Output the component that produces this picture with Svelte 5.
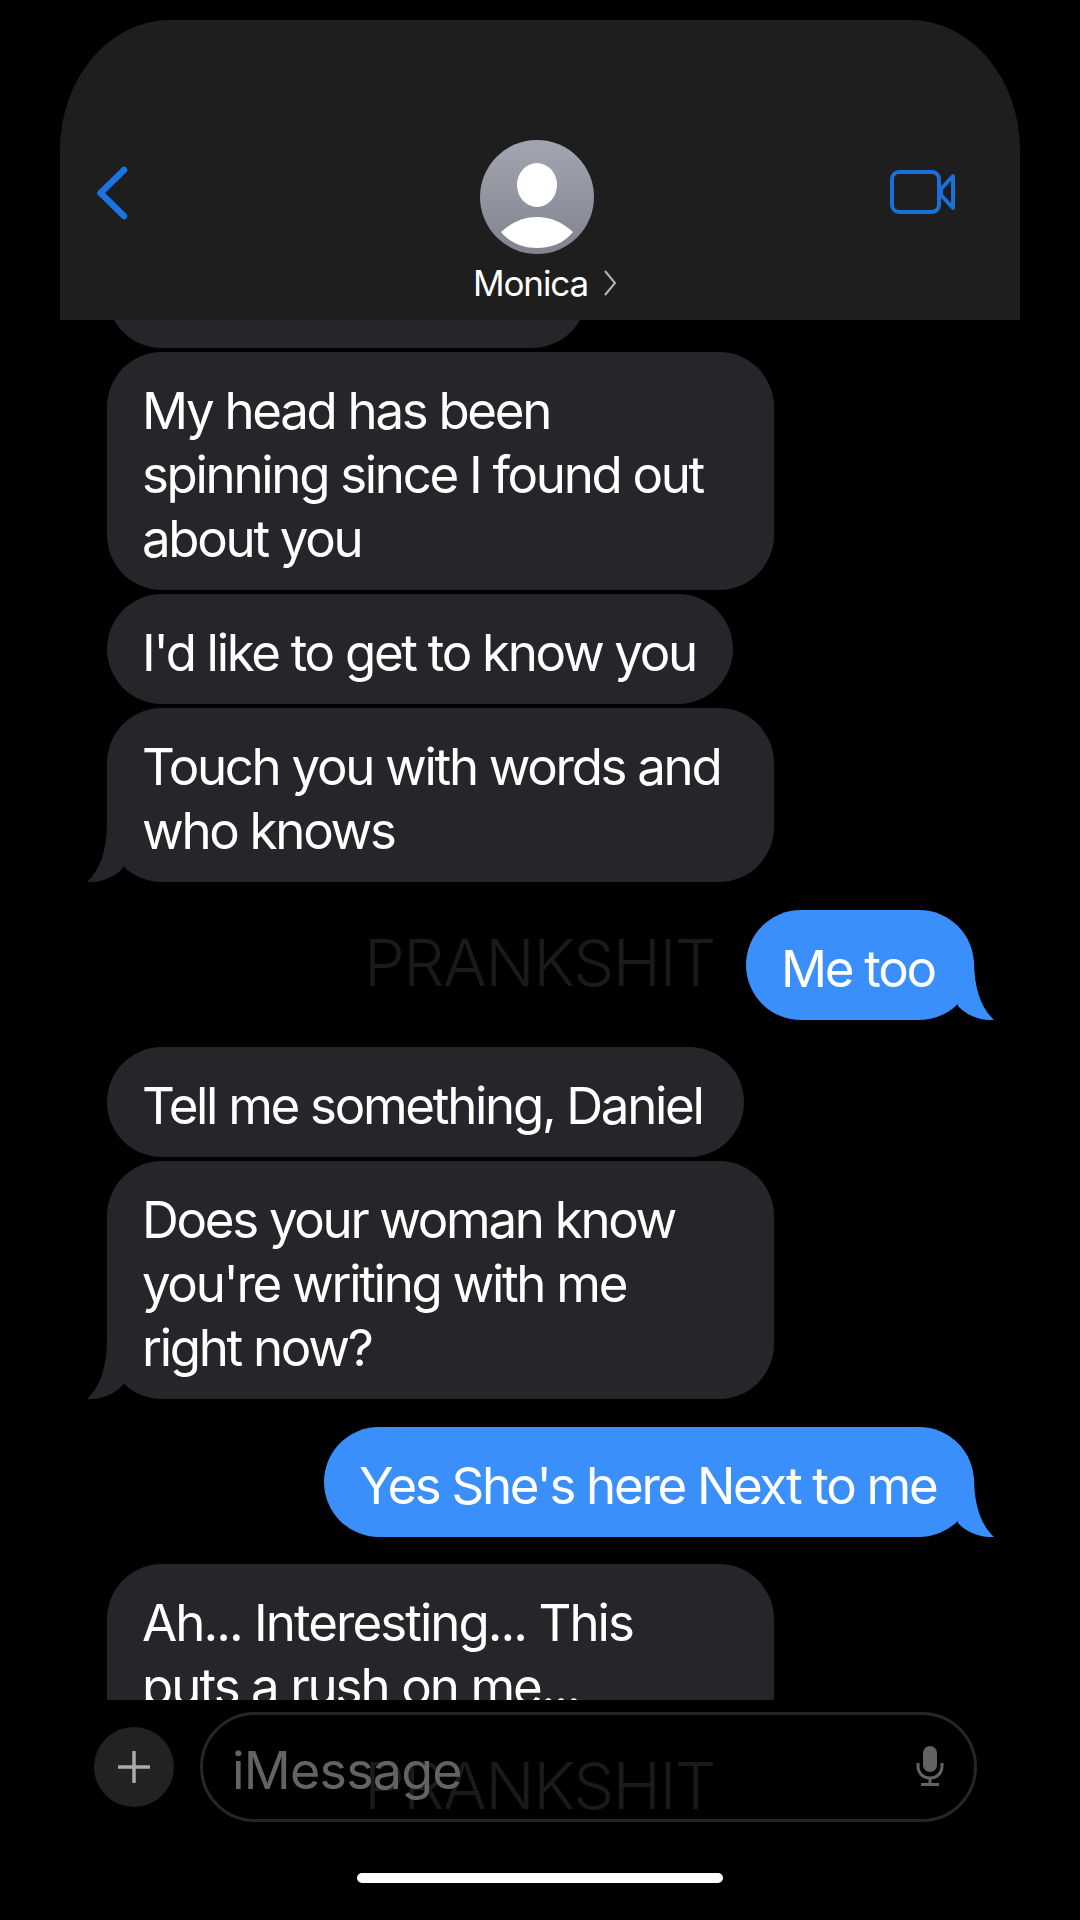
<script>
  const groups = [
    { side: 'in', top: 4, text: ['My head has been', 'spinning since I found out', 'about you'], w: 667 },
    { side: 'in', top: 4, text: ["I'd like to get to know you"], w: 626 },
    { side: 'in', top: 4, text: ['Touch you with words and', 'who knows'], w: 667, tail: true },
    { side: 'out', top: 28, text: ['Me too'], w: 228, tail: true },
    { side: 'in', top: 27, text: ['Tell me something, Daniel'], w: 637 },
    { side: 'in', top: 4, text: ['Does your woman know', "you're writing with me", 'right now?'], w: 667, tail: true },
    { side: 'out', top: 28, text: ["Yes She's here Next to me"], w: 650, tail: true },
    { side: 'in', top: 27, text: ['Ah... Interesting... This', 'puts a rush on me...', 'I need to know more'], w: 667, loose: true }
  ];
</script>

<div class="screen">
  <div class="mark one">PRANKSHIT</div>
  <div class="mark two">PRANKSHIT</div>

  <header class="nav">
    <svg class="back" width="34" height="56" viewBox="0 0 34 56" aria-hidden="true">
      <path d="M29 5 L5.500 28 L29 51" />
    </svg>
    <div class="contact">
      <svg class="avatar" width="114" height="114" viewBox="0 0 114 114" aria-hidden="true">
        <defs>
          <linearGradient id="av" x1="0" y1="0" x2="0" y2="1">
            <stop offset="0" stop-color="#a3a6b0" />
            <stop offset="1" stop-color="#81848e" />
          </linearGradient>
        </defs>
        <circle cx="57" cy="57" r="57" fill="url(#av)" />
        <ellipse cx="57" cy="45" rx="20" ry="22" fill="#fff" />
        <path d="M21 92 C32 82 44 77 57 77 C70 77 82 82 93 92 C84 103 71 108 57 108 C43 108 30 103 21 92 Z" fill="#fff" />
      </svg>
      <div class="name">
        <span>Monica</span>
        <svg width="14" height="26" viewBox="0 0 14 26" aria-hidden="true"><path d="M2 1 L12 13 L2 25" /></svg>
      </div>
    </div>
    <svg class="video" width="66" height="44" viewBox="0 0 66 44" aria-hidden="true">
      <rect x="2" y="2" width="47" height="40" rx="7" />
      <path d="M51 19 L63 6 V38 L51 25 Z" />
    </svg>
  </header>

  <main class="thread">
    <div class="stub"></div>
    {#each groups as g}
      <div class="row {g.side}" style="margin-top:{g.top}px">
        <div class="bubble" class:loose={g.loose} style="width:{g.w}px">
          {#each g.text as line}<div class="line">{line}</div>{/each}
          {#if g.tail}
            <svg class="tail" width="50" height="60" viewBox="0 0 50 60" aria-hidden="true">
              <path d="M31 0 C31 28 24 48 11 60 C26 61 40 54 47 46 L47 0 Z" />
            </svg>
          {/if}
        </div>
      </div>
    {/each}
  </main>

  <footer class="composer">
    <div class="plus">
      <svg width="32" height="32" viewBox="0 0 32 32" aria-hidden="true"><path d="M16 1 V31 M1 16 H31" /></svg>
    </div>
    <div class="field">
      <span class="placeholder">iMessage</span>
      <svg class="mic" width="28" height="40" viewBox="0 0 28 40" aria-hidden="true">
        <rect x="7" y="0" width="14" height="26" rx="7" class="micfill" />
        <path d="M2 17 V20 C2 27 7 32 14 32 C21 32 26 27 26 20 V17 M14 32 V38 M5 38.500 H23" />
      </svg>
    </div>
  </footer>
  <div class="home"><span></span></div>
</div>

<style>
  :global(body) {
    background: #000;
  }
  .screen {
    position: relative;
    width: 1080px;
    height: 1920px;
    background: #000;
    overflow: hidden;
    font-family: Inter, "Liberation Sans", sans-serif;
    color: #fff;
    display: flex;
    flex-direction: column;
    padding-top: 20px;
    box-sizing: border-box;
  }
  .nav {
    height: 300px;
    margin: 0 60px;
    flex: none;
    background: #1e1e1e;
    border-radius: 110px 110px 0 0 / 130px 130px 0 0;
    display: flex;
    justify-content: space-between;
    align-items: flex-start;
    position: relative;
    padding: 145px 64px 0 35px;
    box-sizing: border-box;
  }
  .back path {
    fill: none;
    stroke: #1b74e4;
    stroke-width: 6.500;
    stroke-linecap: round;
    stroke-linejoin: round;
  }
  .contact {
    position: absolute;
    left: 420px;
    top: 120px;
    width: 114px;
    display: flex;
    flex-direction: column;
    align-items: center;
  }
  .avatar {
    display: block;
    flex: none;
  }
  .name {
    display: flex;
    align-items: center;
    gap: 15px;
    margin-top: 5px;
    margin-left: 16px;
    font-size: 35px;
    line-height: 48px;
    letter-spacing: -1.100px;
    white-space: nowrap;
  }
  .name path {
    fill: none;
    stroke: #b5b5b5;
    stroke-width: 2;
  }
  .video {
    margin-top: 5px;
  }
  .video rect,
  .video path {
    fill: none;
    stroke: #1b6fd6;
    stroke-width: 4;
    stroke-linejoin: round;
  }
  .thread {
    height: 1380px;
    flex: none;
    overflow: hidden;
    padding: 0 107px;
    box-sizing: border-box;
    display: flex;
    flex-direction: column;
    position: relative;
  }
  .stub {
    width: 480px;
    height: 110px;
    margin-top: -82px;
    flex: none;
    background: #26262a;
    border-radius: 55px;
  }
  .row {
    display: flex;
    flex: none;
  }
  .row.out {
    justify-content: flex-end;
    margin-right: -1px;
  }
  .bubble {
    position: relative;
    padding: 27px 35px 19px;
    box-sizing: border-box;
    border-radius: 55px;
    font-size: 51px;
    line-height: 64px;
    letter-spacing: -2.300px;
    white-space: nowrap;
  }
  .bubble.loose {
    letter-spacing: -1.950px;
  }
  .in .bubble {
    background: #26262a;
  }
  .out .bubble {
    background: #3a8ffb;
  }
  .tail {
    position: absolute;
    bottom: 0;
    left: -31px;
  }
  .in .tail path {
    fill: #26262a;
  }
  .out .tail {
    left: auto;
    right: -31px;
    transform: scaleX(-1);
  }
  .out .tail path {
    fill: #3a8ffb;
  }
  .composer {
    flex: none;
    display: flex;
    align-items: center;
    height: 110px;
    margin-top: 12px;
    padding: 0 103px 0 94px;
    gap: 26px;
    position: relative;
  }
  .plus {
    width: 80px;
    height: 80px;
    border-radius: 50%;
    background: #222;
    flex: none;
    display: flex;
    align-items: center;
    justify-content: center;
  }
  .plus path {
    fill: none;
    stroke: #aaa;
    stroke-width: 3.500;
    stroke-linecap: round;
  }
  .field {
    flex: 1;
    height: 110px;
    border: 3px solid #262626;
    border-radius: 55px;
    box-sizing: border-box;
    display: flex;
    align-items: center;
    justify-content: space-between;
    padding: 0 30px 0 29px;
  }
  .placeholder {
    font-size: 52px;
    letter-spacing: -0.800px;
    color: #636366;
    margin-top: 6px;
  }
  .mic {
    margin-top: -2px;
  }
  .micfill {
    fill: #636366;
  }
  .mic path {
    fill: none;
    stroke: #636366;
    stroke-width: 3;
  }
  .home {
    flex: 1;
    display: flex;
    justify-content: center;
    padding-top: 51px;
  }
  .home span {
    width: 366px;
    height: 10px;
    border-radius: 5px;
    background: #fff;
  }
  .mark {
    position: absolute;
    left: 364px;
    font-size: 65px;
    line-height: 70px;
    font-weight: 300;
    letter-spacing: -1.500px;
    color: #1a1a1a;
    font-family: Inter, sans-serif;
  }
  .mark.one {
    top: 928px;
  }
  .mark.two {
    top: 1751px;
  }
</style>
